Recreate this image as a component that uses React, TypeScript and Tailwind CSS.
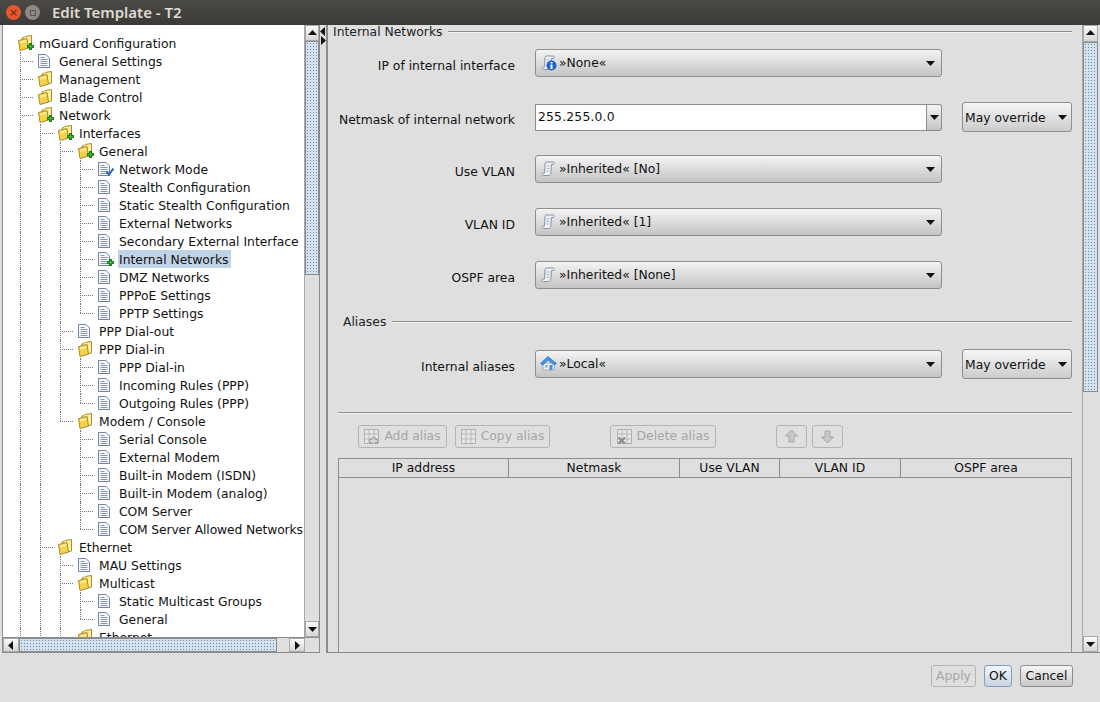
import React from 'react';

type IconKind = 'folder' | 'folderPlus' | 'doc' | 'docCheck' | 'docPlus';

interface TreeRow {
  label: string;
  depth: number;
  icon: IconKind;
  selected?: boolean;
  tight?: boolean;
}

const rows: TreeRow[] = [
  { label: 'mGuard Configuration', depth: 0, icon: 'folderPlus' },
  { label: 'General Settings', depth: 1, icon: 'doc' },
  { label: 'Management', depth: 1, icon: 'folder' },
  { label: 'Blade Control', depth: 1, icon: 'folder' },
  { label: 'Network', depth: 1, icon: 'folderPlus' },
  { label: 'Interfaces', depth: 2, icon: 'folderPlus' },
  { label: 'General', depth: 3, icon: 'folderPlus' },
  { label: 'Network Mode', depth: 4, icon: 'docCheck' },
  { label: 'Stealth Configuration', depth: 4, icon: 'doc' },
  { label: 'Static Stealth Configuration', depth: 4, icon: 'doc' },
  { label: 'External Networks', depth: 4, icon: 'doc' },
  { label: 'Secondary External Interface', depth: 4, icon: 'doc' },
  { label: 'Internal Networks', depth: 4, icon: 'docPlus', selected: true },
  { label: 'DMZ Networks', depth: 4, icon: 'doc' },
  { label: 'PPPoE Settings', depth: 4, icon: 'doc' },
  { label: 'PPTP Settings', depth: 4, icon: 'doc' },
  { label: 'PPP Dial-out', depth: 3, icon: 'doc' },
  { label: 'PPP Dial-in', depth: 3, icon: 'folder' },
  { label: 'PPP Dial-in', depth: 4, icon: 'doc' },
  { label: 'Incoming Rules (PPP)', depth: 4, icon: 'doc' },
  { label: 'Outgoing Rules (PPP)', depth: 4, icon: 'doc' },
  { label: 'Modem / Console', depth: 3, icon: 'folder' },
  { label: 'Serial Console', depth: 4, icon: 'doc' },
  { label: 'External Modem', depth: 4, icon: 'doc' },
  { label: 'Built-in Modem (ISDN)', depth: 4, icon: 'doc' },
  { label: 'Built-in Modem (analog)', depth: 4, icon: 'doc' },
  { label: 'COM Server', depth: 4, icon: 'doc' },
  { label: 'COM Server Allowed Networks', depth: 4, icon: 'doc', tight: true },
  { label: 'Ethernet', depth: 2, icon: 'folder' },
  { label: 'MAU Settings', depth: 3, icon: 'doc' },
  { label: 'Multicast', depth: 3, icon: 'folder' },
  { label: 'Static Multicast Groups', depth: 4, icon: 'doc' },
  { label: 'General', depth: 4, icon: 'doc' },
  { label: 'Ethernet', depth: 3, icon: 'folder' },
];

// the tree is clipped at the bottom, so running off the end counts as "continues"
const continues = (index: number, col: number) => {
  for (let i = index + 1; i < rows.length; i++) {
    if (rows[i].depth < col) return false;
    if (rows[i].depth === col) return true;
  }
  return true;
};

const TreeIcon = ({ kind }: { kind: IconKind }) => {
  const isFolder = kind === 'folder' || kind === 'folderPlus';
  return (
    <svg width="18" height="18" viewBox="0 0 18 18" className="block shrink-0">
      {isFolder ? (
        <g>
          <path d="M4 4 L6 3.500 L7 2.500 L13.500 1.500 V13 L5 15z" fill="#fdf0a6" stroke="#ac8b20" />
          <path d="M.5 6.500 L9 4.500 L10.500 14 L2 16.500 Z" fill="#f6d24c" stroke="#ac8b20" />
          <path d="M2 7.500 L8 6 L8.500 8 L2.500 9.500 Z" fill="#fdeea0" />
        </g>
      ) : (
        <g>
          <path d="M.5 2.500 H8 L11.500 6 V15.500 H.5 Z" fill="#f7f9fd" stroke="#6e82ab" />
          <path d="M2.500 5.500h4M2.500 7.500h7M2.500 9.500h7M2.500 11.500h7M2.500 13.500h7" stroke="#8795ad" />
        </g>
      )}
      {(kind === 'folderPlus' || kind === 'docPlus') && (
        <path d="M11.500 9.500h2v2h2v2h-2v2h-2v-2h-2v-2h2z" fill="#3ebf2e" stroke="#0f6b0b" strokeWidth="1" />
      )}
      {kind === 'docCheck' && <path d="M8.500 11.500 L11 14.500 L15.500 8.500" fill="none" stroke="#1f62c4" strokeWidth="2" />}
    </svg>
  );
};

const Arrow = ({ dir, className = '' }: { dir: 'up' | 'down' | 'left' | 'right'; className?: string }) => {
  const points = { up: '0,6 9,6 4.500,1', down: '0,2 9,2 4.500,7', left: '6,0 6,9 1,4.500', right: '2,0 2,9 7,4.500' }[dir];
  return (
    <svg width="9" height="9" viewBox="0 0 9 9" className={className}>
      <polygon points={points} fill="#111" />
    </svg>
  );
};

const ScrollButton = ({ dir, className = '' }: { dir: 'up' | 'down' | 'left' | 'right'; className?: string }) => (
  <div className={`flex items-center justify-center border border-[#a8a8a8] bg-gradient-to-b from-[#fbfbfb] to-[#d6d6d6] ${className}`}>
    <Arrow dir={dir} />
  </div>
);

const Thumb = ({ className = '' }: { className?: string }) => (
  <div className={`border border-[#8a8a8a] bg-[#d3e2f1] bg-[radial-gradient(#71859c_0.8px,transparent_0.9px)] bg-[length:3px_3px] ${className}`} />
);

const Tree = () => (
  <div className="flex min-w-0 flex-1 flex-col overflow-hidden bg-white pt-[9px]">
    {rows.map((row, i) => (
      <div key={i} className="flex h-[18px] shrink-0 items-center pl-[17px]">
        {Array.from({ length: row.depth }).map((_, c) => {
          const col = c + 1;
          const last = col === row.depth;
          const goesOn = continues(i, col);
          return (
            <div key={c} className="relative h-[18px] w-5 shrink-0">
              {(goesOn || last) && (
                <div className={`absolute left-0 top-0 border-l border-dotted border-[#777] ${goesOn ? 'bottom-0' : 'h-[9px]'}`} />
              )}
              {last && <div className="absolute left-0 top-[9px] w-[13px] border-t border-dotted border-[#777]" />}
            </div>
          );
        })}
        <div className="-ml-[2px] w-[20px] shrink-0">
          <TreeIcon kind={row.icon} />
        </div>
        <span
          className={`h-[18px] whitespace-nowrap pl-px pr-[3px] leading-[20px] text-[#111] ${row.selected ? 'bg-[#c0d2e6]' : ''} ${row.tight ? 'tracking-[-0.14px]' : ''}`}
        >
          {row.label}
        </span>
      </div>
    ))}
  </div>
);

const ScrollIcon = () => (
  <svg width="17" height="17" viewBox="0 0 17 17" className="shrink-0">
    <path d="M6 2h7c1.200 0 1.800 1.500.5 2.500H11.500L11 12c-.1 2-1 3.500-2.500 3.500H3.500c-1.500 0-2-1.500-.8-2.500H4.500L5 4c.1-1 .4-2 1-2z" fill="#eef0f7" stroke="#8a91a6" />
    <path d="M6.500 6h3M6.500 8.500h3M6.300 11h3" stroke="#aeb4c4" />
  </svg>
);

const InfoIcon = () => (
  <div className="relative h-[17px] w-[17px] shrink-0">
    <ScrollIcon />
    <svg width="11" height="11" viewBox="0 0 11 11" className="absolute bottom-0 right-0">
      <circle cx="5.500" cy="5.500" r="5" fill="#1c66c8" />
      <path d="M5.500 2v1.500M5.500 4.500V9" stroke="#fff" strokeWidth="2" />
    </svg>
  </div>
);

const HomeIcon = () => (
  <svg width="17" height="17" viewBox="0 0 17 17" className="shrink-0">
    <path d="M3 8h11.500v7H3z" fill="#eef0f3" stroke="#a4abb6" />
    <path d="M.5 8.500 L8 1.500 L16.500 8.500 L14 10 L8 5 L3 10 Z" fill="#3f95e6" stroke="#2b74bf" strokeWidth="0.700" />
    <path d="M9.500 10h3v5h-3z" fill="#3f8ed8" />
    <path d="M5 10h3v2.500H5z" fill="#85bbea" />
  </svg>
);

const Caret = () => (
  <svg width="9" height="5" viewBox="0 0 9 5" className="shrink-0">
    <polygon points="0,0 9,0 4.500,5" fill="#111" />
  </svg>
);

const Combo = ({ icon, text }: { icon: React.ReactNode; text: string }) => (
  <div className="flex h-[28px] w-[407px] shrink-0 items-start rounded-[3px] border border-[#8e8e8e] bg-gradient-to-b from-[#f4f4f4] to-[#c4c4c4] pl-1 pr-[6px] pt-[4px]">
    {icon}
    <span className="ml-[2px] whitespace-nowrap leading-[18px] text-[#111]">{text}</span>
    <div className="ml-auto mt-[7px]">
      <Caret />
    </div>
  </div>
);

const Override = () => (
  <div className="ml-[20px] flex h-[30px] w-[110px] shrink-0 items-center justify-between rounded-[3px] border border-[#8e8e8e] bg-gradient-to-b from-[#f6f6f6] to-[#cccccc] pl-[2px] pr-[4px] text-[#111]">
    <span className="whitespace-nowrap pt-[2px]">May override</span>
    <Caret />
  </div>
);

const FormLabel = ({ children }: { children: string }) => (
  <div className="w-[177px] shrink-0 whitespace-nowrap pt-[6px] text-right text-[#111]">{children}</div>
);

const FormRow = ({ label, children, className = '' }: { label: string; children: React.ReactNode; className?: string }) => (
  <div className={`flex items-center ${className}`}>
    <FormLabel>{label}</FormLabel>
    <div className="ml-[20px] flex items-center">{children}</div>
  </div>
);

const TableIcon = ({ mark }: { mark?: 'plus' | 'x' }) => (
  <svg width="15" height="15" viewBox="0 0 15 15" className="shrink-0">
    <path d="M.5.500h14v14H.5z" fill="#e6e6e6" stroke="#b0b0b0" />
    <path d="M.5 5h14M.5 10h14M5 .500v14M10 .500v14" stroke="#b8b8b8" />
    {mark === 'plus' && <path d="M8 8.500h3v2h2.500v3H11V15H8v-1.500H5.500v-3H8z" fill="#d8d8d8" stroke="#9a9a9a" />}
    {mark === 'x' && <path d="M1.500 8.500 L8 14.500 M8 8.500 L1.500 14.500" stroke="#8a8a8a" strokeWidth="2" />}
  </svg>
);

const DisabledButton = ({ icon, label, className = '' }: { icon: React.ReactNode; label: string; className?: string }) => (
  <div className={`flex h-[23px] shrink-0 items-center justify-center gap-[5px] rounded-[3px] border border-[#b4b4b4] text-[#a6a6a6] ${className}`}>
    {icon}
    {label && <span className="whitespace-nowrap">{label}</span>}
  </div>
);

const MoveIcon = ({ down }: { down?: boolean }) => (
  <svg width="15" height="15" viewBox="0 0 15 15">
    <path
      d={down ? 'M5 2h5v6h3.500L7.500 14 1.500 8H5z' : 'M5 13h5V7h3.500L7.500 1 1.500 7H5z'}
      fill="#c8c8c8"
      stroke="#a6a6a6"
    />
  </svg>
);

const SectionTitle = ({ title, className = '' }: { title: string; className?: string }) => (
  <div className={`flex items-center gap-[6px] ${className}`}>
    <span className="whitespace-nowrap leading-[14px] text-[#222]">{title}</span>
    <div className="h-[2px] flex-1 border-t border-[#8e8e8e] bg-[#f2f2f2]" />
  </div>
);

const columns = [
  { title: 'IP address', w: 'w-[170px]' },
  { title: 'Netmask', w: 'w-[171px]' },
  { title: 'Use VLAN', w: 'w-[100px]' },
  { title: 'VLAN ID', w: 'w-[121px]' },
  { title: 'OSPF area', w: 'flex-1' },
];

const App = () => (
  <div className="flex h-[702px] w-[1100px] flex-col overflow-hidden bg-[#dfdfdf] font-['DejaVu_Sans',sans-serif] text-[12.35px]">
    {/* Title bar */}
    <div className="flex h-[25px] shrink-0 items-center bg-gradient-to-b from-[#4c4a45] to-[#3b3a36] pl-[6px]">
      <div className="flex h-[15px] w-[15px] items-center justify-center rounded-full bg-[#e4582f] text-[11px] leading-none text-[#6e2410]">×</div>
      <div className="ml-[4px] flex h-[15px] w-[15px] items-center justify-center rounded-full bg-[#8c8a83]">
        <div className="h-[6px] w-[6px] border border-[#55534e]" />
      </div>
      <span className="ml-[12px] whitespace-nowrap font-['Noto_Sans',sans-serif] text-[15px] font-semibold text-[#dfdbd2]">Edit Template - T2</span>
    </div>

    {/* Split pane */}
    <div className="flex h-[628px] shrink-0 pl-[2px]">
      {/* Left: navigation tree */}
      <div className="flex w-[318px] shrink-0 flex-col border-b border-l border-r border-[#8c8c8c]">
        <div className="flex min-h-0 flex-1">
          <Tree />
          <div className="flex w-[15px] shrink-0 flex-col border-l border-[#a8a8a8] bg-[#dfdfdf]">
            <ScrollButton dir="up" className="h-[16px] shrink-0" />
            <Thumb className="h-[234px] shrink-0" />
            <div className="flex-1" />
            <ScrollButton dir="down" className="h-[16px] shrink-0" />
          </div>
        </div>
        <div className="flex h-[15px] shrink-0 border-t border-[#8c8c8c] bg-[#dfdfdf]">
          <ScrollButton dir="left" className="w-[16px] shrink-0" />
          <Thumb className="w-[258px] shrink-0" />
          <div className="flex-1" />
          <ScrollButton dir="right" className="w-[16px] shrink-0" />
          <div className="w-[14px] shrink-0" />
        </div>
      </div>

      {/* Split divider */}
      <div className="flex w-[6px] shrink-0 flex-col items-center pt-[2px]">
        <Arrow dir="left" />
        <Arrow dir="right" />
      </div>

      {/* Right: form */}
      <div className="flex min-w-0 flex-1 border-b border-l-2 border-[#8c8c8c]">
        <div className="flex min-w-0 flex-1 flex-col overflow-hidden pl-[10px] pr-[10px]">
          <SectionTitle title="Internal Networks" className="-ml-[5px]" />

          <FormRow label="IP of internal interface" className="mt-[10px]">
            <Combo icon={<InfoIcon />} text="»None«" />
          </FormRow>

          <FormRow label="Netmask of internal network" className="mt-[25px]">
            <div className="flex h-[27px] w-[407px] shrink-0">
              <div className="flex flex-1 items-center border border-[#8e8e8e] bg-white pl-[2px] tracking-[0.2px] text-[#111]">255.255.0.0</div>
              <div className="flex w-[15px] shrink-0 items-center justify-center rounded-r-[3px] border border-l-0 border-[#8e8e8e] bg-gradient-to-b from-[#f4f4f4] to-[#c4c4c4]">
                <Caret />
              </div>
            </div>
            <Override />
          </FormRow>

          <FormRow label="Use VLAN" className="mt-[23px]">
            <Combo icon={<ScrollIcon />} text="»Inherited« [No]" />
          </FormRow>
          <FormRow label="VLAN ID" className="mt-[25px]">
            <Combo icon={<ScrollIcon />} text="»Inherited« [1]" />
          </FormRow>
          <FormRow label="OSPF area" className="mt-[25px]">
            <Combo icon={<ScrollIcon />} text="»Inherited« [None]" />
          </FormRow>

          <SectionTitle title="Aliases" className="ml-[5px] mt-[26px]" />

          <FormRow label="Internal aliases" className="mt-[20px]">
            <Combo icon={<HomeIcon />} text="»Local«" />
            <Override />
          </FormRow>

          <div className="mt-[33px] h-[2px] shrink-0 border-t border-[#8e8e8e] bg-[#f2f2f2]" />

          <div className="mt-[10px] flex pl-[20px] pt-px">
            <DisabledButton icon={<TableIcon mark="plus" />} label="Add alias" className="w-[89px]" />
            <DisabledButton icon={<TableIcon />} label="Copy alias" className="ml-[8px] w-[95px]" />
            <DisabledButton icon={<TableIcon mark="x" />} label="Delete alias" className="ml-[60px] w-[106px]" />
            <DisabledButton icon={<MoveIcon />} label="" className="ml-[60px] w-[31px]" />
            <DisabledButton icon={<MoveIcon down />} label="" className="ml-[5px] w-[31px]" />
          </div>

          <div className="mt-[10px] flex min-h-0 flex-1 flex-col border border-b-0 border-[#8e8e8e]">
            <div className="flex h-[19px] shrink-0 border-b border-[#8e8e8e]">
              {columns.map((col, i) => (
                <div
                  key={col.title}
                  className={`flex items-center justify-center whitespace-nowrap text-[#111] ${col.w} ${i < columns.length - 1 ? 'border-r border-r-[#8e8e8e]' : ''}`}
                >
                  {col.title}
                </div>
              ))}
            </div>
          </div>
        </div>

        <div className="flex w-[16px] shrink-0 flex-col border-l border-[#a8a8a8] bg-[#dfdfdf]">
          <ScrollButton dir="up" className="h-[17px] shrink-0" />
          <Thumb className="h-[350px] shrink-0" />
          <div className="flex-1" />
          <ScrollButton dir="down" className="h-[16px] shrink-0" />
        </div>
        <div className="w-[2px] shrink-0" />
      </div>
    </div>

    {/* Dialog buttons */}
    <div className="flex flex-1 items-start justify-end pr-[27px] pt-[12px]">
      <div className="flex h-[22px] w-[45px] items-center justify-center rounded-[3px] border border-[#b4b4b4] text-[#a6a6a6]">Apply</div>
      <div className="ml-[8px] flex h-[22px] w-[28px] items-center justify-center rounded-[3px] border border-[#7f9cc0] bg-gradient-to-b from-[#f2f6fb] to-[#c9d3de] text-[#111]">OK</div>
      <div className="ml-[8px] flex h-[22px] w-[53px] items-center justify-center rounded-[3px] border border-[#8e8e8e] bg-gradient-to-b from-[#f6f6f6] to-[#c8c8c8] text-[#111]">Cancel</div>
    </div>
  </div>
);

export default App;
